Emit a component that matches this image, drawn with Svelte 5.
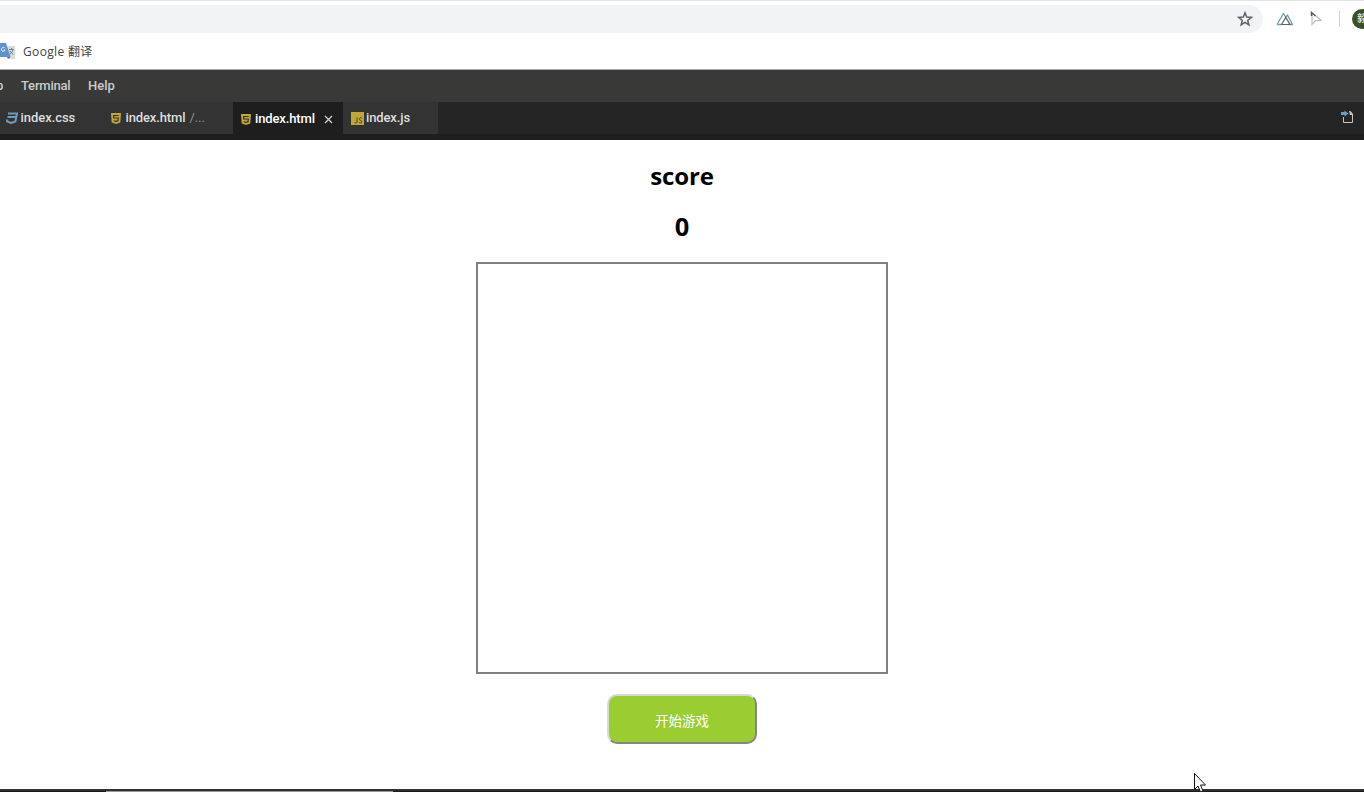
<script>
  const tabs = [
    { kind: 'css', name: 'index.css', cls: 'first' },
    { kind: 'html', name: 'index.html', hint: '/...', cls: 'second' },
    { kind: 'html', name: 'index.html', cls: 'active', close: true },
    { kind: 'js', name: 'index.js', cls: 'last' }
  ];
</script>

<div class="screen">
  <div class="toolbar">
    <div class="address">
      <svg class="star" width="16" height="16" viewBox="0 0 16 16"><path d="M8 1.8l1.7 4.3 4.6.3-3.6 3 1.2 4.5L8 11.4l-3.9 2.5 1.2-4.500-3.600-3 4.600-.3z" fill="none" stroke="#5f6368" stroke-width="1.500" /></svg>
    </div>
    <svg class="peaks" width="18" height="14" viewBox="0 0 18 14"><path d="M1 12.500h4.500M1 12.500L7.500 1.500L10 5.500" fill="none" stroke="#71a0b3" stroke-width="1.300" /><path d="M9 6L11.500 3.200L16.500 12.500H12" fill="none" stroke="#779eac" stroke-width="1.300" /><path d="M5.500 12.500L9.800 5.500L14 12.500z" fill="none" stroke="#59666c" stroke-width="1.200" /></svg>
    <svg class="pointer" width="13" height="16" viewBox="0 0 13 16"><path d="M2 2V13.500L5.500 9.700L11 9.500L5.500 4.500" fill="none" stroke="#b9bcbe" stroke-width="1.200" /><path d="M1.500 5V1.500l4 3.500" fill="none" stroke="#55595c" stroke-width="1.500" /></svg>
    <span class="divider"></span>
    <span class="avatar">毅</span>
  </div>

  <div class="bookmarks">
    <svg width="15" height="16" viewBox="0 0 15 16"><path d="M4 3h11v13H9z" fill="#dadcde" /><path d="M0 0h6l4.500 14H0z" fill="#5f91cd" /><path d="M7 14h3.500L8 16z" fill="#426ca6" /><path d="M9 6.500h5M11.500 5v1.500M13 6.500c-.5 2.500-2 4-3.500 5M9.800 8c1 1.500 2 2.600 3.700 3.500" fill="none" stroke="#6f8589" /><path d="M5 5.300C4.500 4 2 4 1.500 5.800S2.800 9 4.300 8.200L5 7H3.500" fill="none" stroke="#dceaff" /></svg>
    <span>Google 翻译</span>
  </div>

  <nav><span class="cut">p</span><span class="terminal">Terminal</span><span>Help</span></nav>

  <div class="tabs">
    {#each tabs as tab}
      <div class={'tab ' + tab.cls}>
        {#if tab.kind === 'css'}
          <svg width="12" height="12" viewBox="0 0 12 12"><path d="M2 1.500h9L9.400 9.400L5 11L1 9.400L1.400 7.500M1.500 5H9.500" fill="none" stroke="#6e9bbb" stroke-width="2" /></svg>
        {:else if tab.kind === 'html'}
          <svg width="10" height="11" viewBox="0 0 10 11"><path d="M0 0h10L9.300 9.500L5 11L.7 9.500z" fill="#bfa637" /><path d="M7.700 2.500H2.700V5H7.300L7 7.700L5 8.400L2.700 7.700" fill="none" stroke="#373322" stroke-width="1.200" /></svg>
        {:else}
          <svg width="13" height="13" viewBox="0 0 13 13"><path d="M0 0h13v13H0z" fill="#bfa637" /><path d="M6 5.500v4.500c0 1.500-2 1.500-2.300.3M11 6.200C10 5 7.700 6 8.500 7.600C9 8.500 11 8.500 10.900 10C10.800 11.400 8.500 11.300 8 10.200" fill="none" stroke="#4c4527" /></svg>
        {/if}
        <span class="name">{tab.name}</span>
        {#if tab.hint}<span class="hint">{tab.hint}</span>{/if}
        {#if tab.close}<svg class="close" width="9" height="9" viewBox="0 0 9 9"><path d="M1 1l7 7M8 1L1 8" stroke="#d0d0d0" stroke-width="1.300" /></svg>{/if}
      </div>
    {/each}
    <svg class="open" width="13" height="14" viewBox="0 0 13 14"><path d="M2.500 7v5.500h9V4.500" fill="none" stroke="#c5c5c5" /><path d="M8 1h1.500L12 4v1H9z" fill="#c5c5c5" /><path d="M0 2h3.500V.5L7.500 3.500L3.500 6.500V5H0z" fill="#6c9dc0" /></svg>
  </div>

  <main>
    <h1>score</h1>
    <h2>0</h2>
    <div class="board"></div>
    <button>开始游戏</button>
  </main>
  <footer><span></span></footer>
  <svg class="cursor" width="14" height="22" viewBox="0 0 14 22"><path d="M1.500 1.500V17.500L5 14L7.500 20L10 19L7.500 13H12.500z" fill="#fff" stroke="#111" stroke-width="1" /></svg>
</div>

<style>
  :global(body) { margin: 0; overflow: hidden; background: #fff; }
  svg { display: block; flex: none; }
  .screen { width: 1364px; height: 792px; position: relative; overflow: hidden; display: flex; flex-direction: column; background: #fff; font-family: Roboto, "Noto Sans CJK SC", sans-serif; }
  .toolbar { box-sizing: border-box; height: 33px; flex: none; display: flex; align-items: center; border-top: 1px solid #e2e5e8; padding-top: 4px; }
  .address { width: 1263px; height: 28px; flex: none; border-radius: 0 14px 14px 0; background: #f1f3f4; display: flex; align-items: center; justify-content: flex-end; padding-right: 10px; box-sizing: border-box; }
  .peaks { margin-left: 13px; }
  .pointer { margin-left: 16px; }
  .divider { width: 1px; height: 16px; flex: none; margin-left: 16px; background: #cdd0d3; }
  .avatar { width: 20px; height: 20px; flex: none; margin-left: 12px; border-radius: 50%; background: #3b5026; color: #e3e4df; font-size: 10px; font-weight: 500; line-height: 20px; text-align: center; }
  .bookmarks { box-sizing: border-box; height: 37px; flex: none; display: flex; align-items: center; border-bottom: 1px solid #aaa; color: #404346; font: 12px/18px "Open Sans", "Noto Sans CJK SC", sans-serif; letter-spacing: .35px; }
  .bookmarks span { margin: 2px 0 0 8px; }
  nav { height: 32px; flex: none; display: flex; align-items: center; background: #393937; color: #cbcbca; font: 500 13px/18px Roboto, sans-serif; }
  .cut { margin-left: -4px; width: 8px; }
  .terminal { width: 49px; margin: 0 18px 0 17px; letter-spacing: -.2px; }
  .tabs { height: 32px; flex: none; display: flex; align-items: center; background: #252525; border-bottom: 6px solid #1e1e1e; color: #dedede; font: 500 13px/18px Roboto, sans-serif; }
  .tab { height: 32px; box-sizing: border-box; display: flex; align-items: center; flex: none; background: #333; }
  .first { width: 104px; padding-left: 6px; }
  .second { width: 129px; padding-left: 7px; }
  .active { width: 110px; padding: 2px 0 0 8px; background: #1e1e1e; color: #fff; }
  .last { width: 95px; padding-left: 8px; }
  .name { margin-left: 4px; letter-spacing: -.12px; }
  .second .name { margin-left: 4.500px; }
  .first .name { margin-left: 2.500px; letter-spacing: -.05px; }
  .last .name { margin-left: 2px; letter-spacing: -.12px; }
  .hint { margin-left: 4px; color: #929292; font-weight: 400; letter-spacing: -.1px; }
  .close { margin-left: 9px; }
  .open { margin: 0 10px 2px auto; }
  main { height: 649px; flex: none; display: flex; flex-direction: column; align-items: center; color: #000; }
  h1, h2 { margin: 0; font: 700 24px/34px "Open Sans", sans-serif; }
  h1 { margin-top: 19px; letter-spacing: -.15px; }
  h2 { margin-top: 16px; font-size: 25.500px; }
  .board { box-sizing: border-box; width: 412px; height: 412px; margin-top: 19px; border: 2px solid #808080; flex: none; }
  button { width: 150px; height: 50px; margin-top: 20px; padding: 1px 0 0; border: 2px solid; border-color: #d7d9d4 #858585 #858585 #d7d9d4; border-radius: 10px; background: #9acd32; color: #fff; font: 13.500px/20px "Noto Sans CJK SC", sans-serif; flex: none; }
  footer { height: 3px; flex: none; box-sizing: border-box; padding-top: 2px; background: linear-gradient(#303030 2px, #1a1a1a 2px); }
  footer span { display: block; width: 287px; height: 1px; margin-left: 106px; background: #999; }
  .cursor { position: absolute; left: 1193px; top: 772px; }
</style>
